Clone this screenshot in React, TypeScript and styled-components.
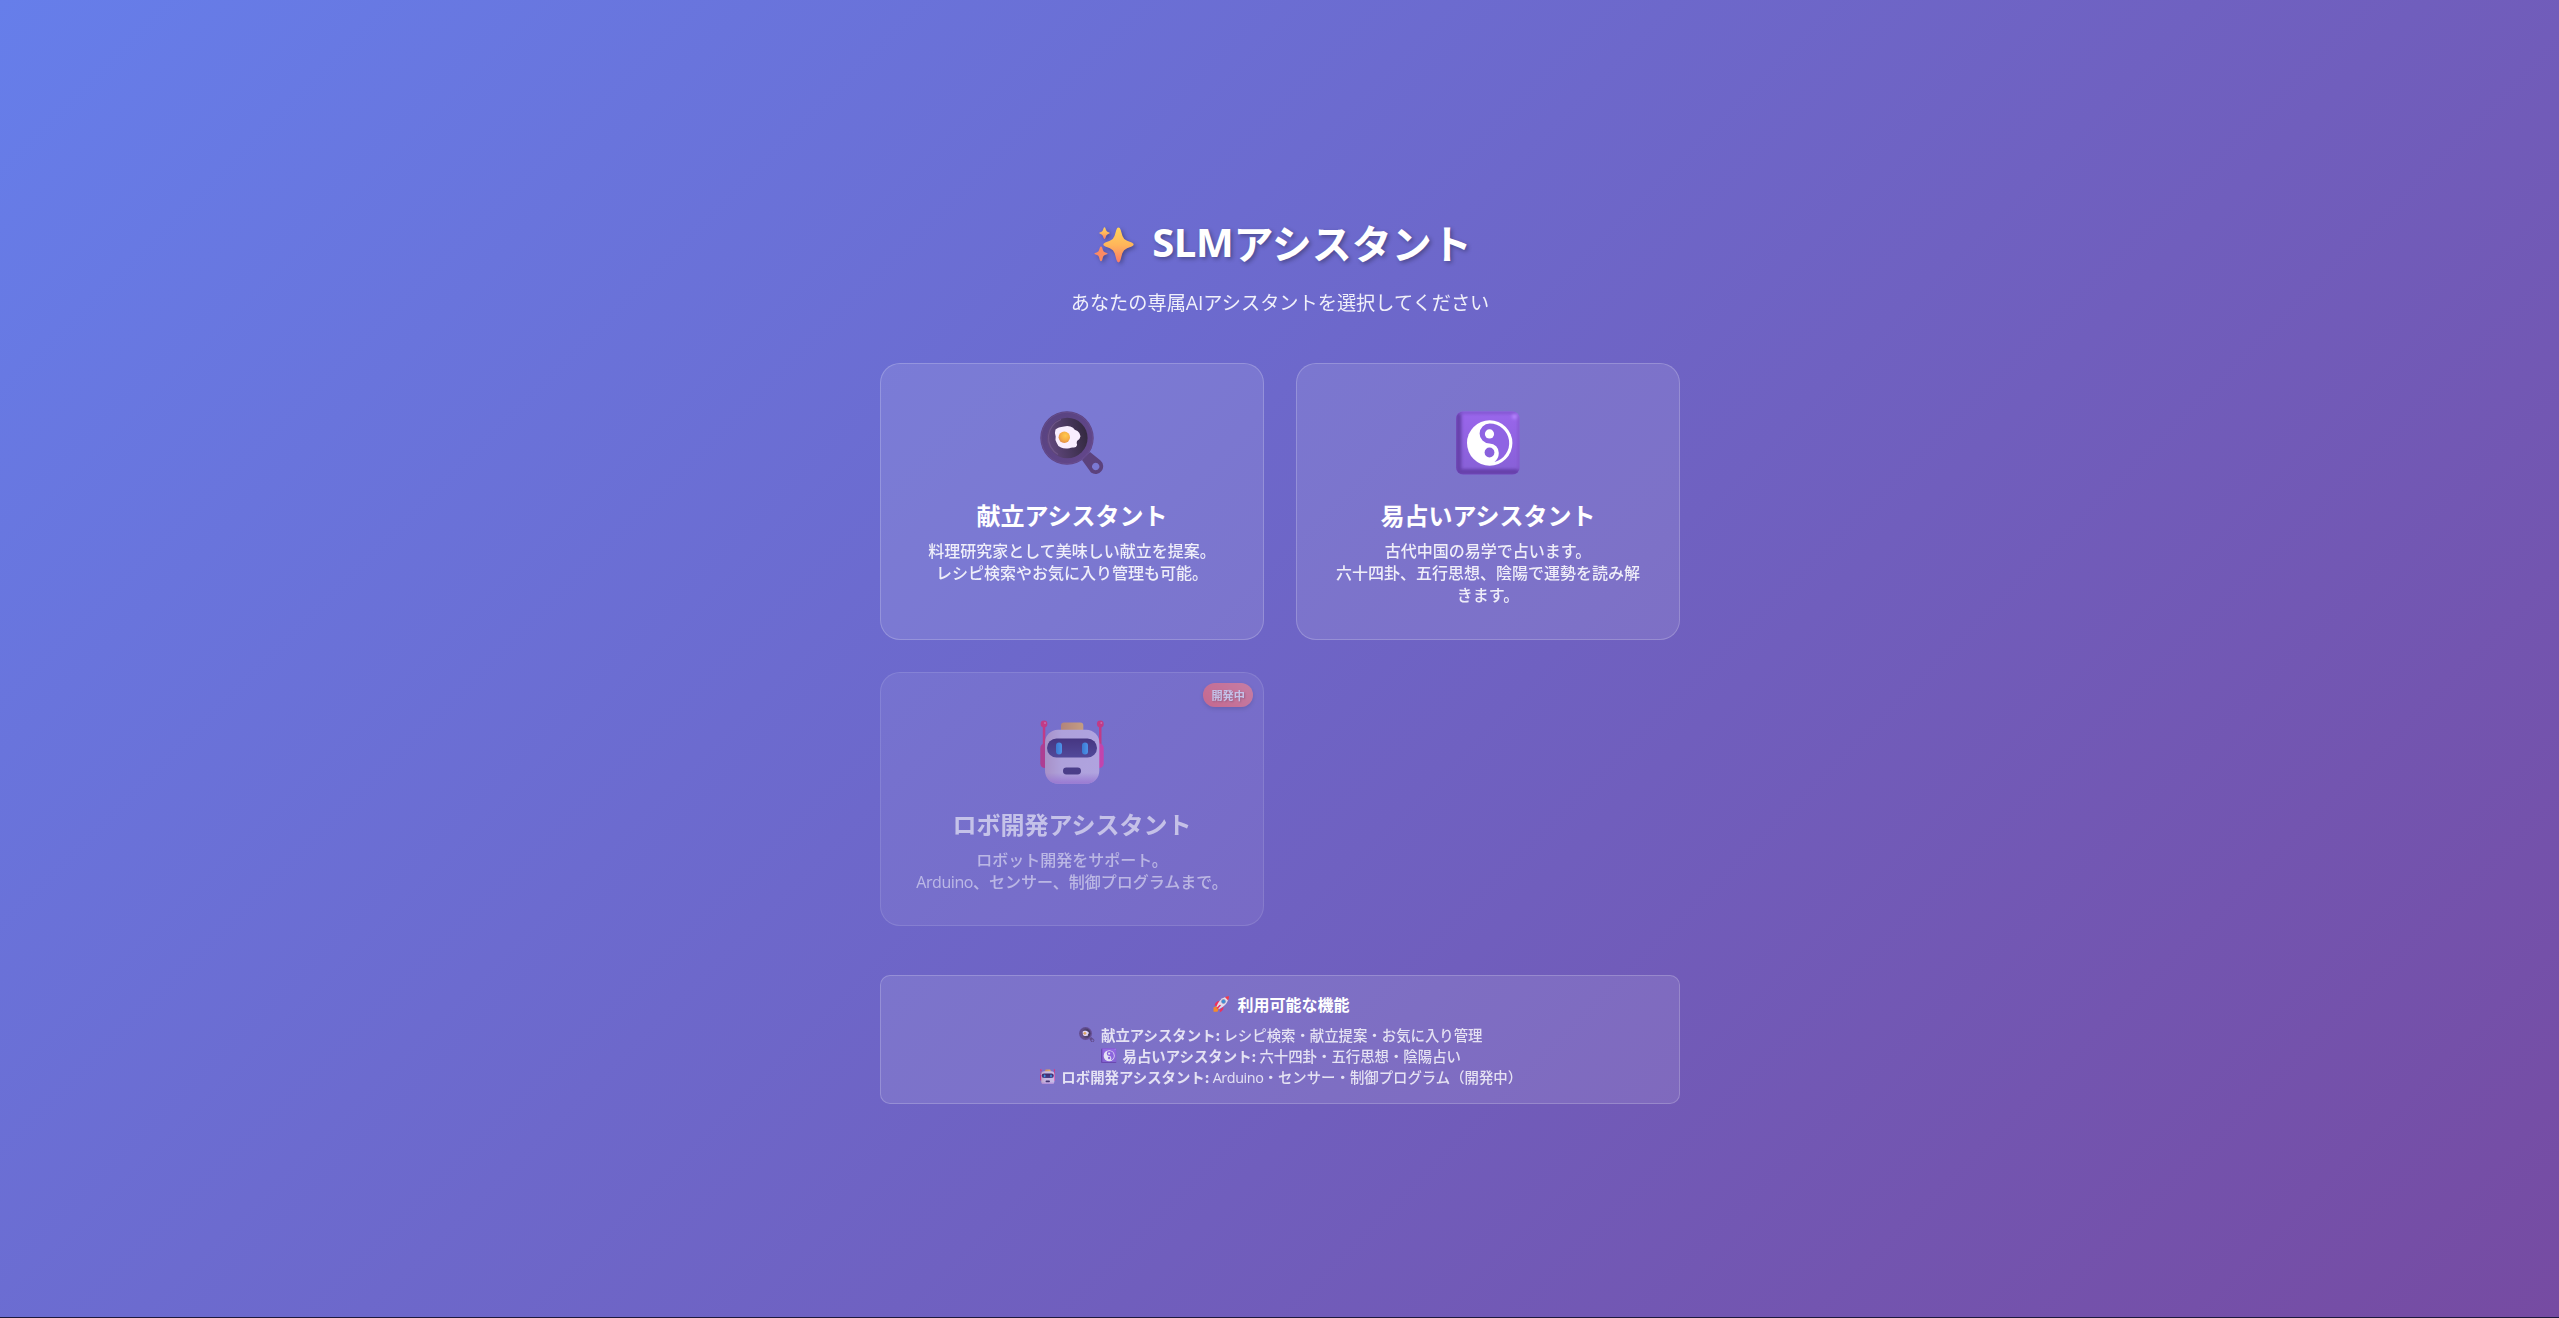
import React from "react";
import styled, { createGlobalStyle, css } from "styled-components";

const GlobalStyle = createGlobalStyle`
  * { margin: 0; padding: 0; box-sizing: border-box; }
  body {
    font-family: "Noto Sans CJK JP", "Noto Sans", sans-serif;
    color: #fff;
    background: #1c1a3c;
  }
`;

const Page = styled.div`
  height: 1317px;
  padding: 213px 0 0 1px;
  display: flex;
  flex-direction: column;
  align-items: center;
  background: linear-gradient(135deg, #667eea 0%, #764ba2 100%);
`;

const Container = styled.main`
  width: 800px;
  text-align: center;
`;

const Latin = styled.span<{ $tracking?: string }>`
  font-family: "Open Sans", "Noto Sans", sans-serif;
  line-height: 1;
  letter-spacing: ${(p) => p.$tracking ?? "-0.028em"};
`;

const Heading = styled.h1`
  display: flex;
  justify-content: center;
  align-items: center;
  height: 60px;
  padding-bottom: 2px;
  font-size: 40px;
  line-height: 58px;
  font-weight: 700;
  text-shadow: 2px 2px 4px rgba(0, 0, 0, 0.3);

  svg {
    width: 40px;
    height: 36px;
    margin: 5px 18px 0 6px;
    filter: drop-shadow(2px 2px 2px rgba(0, 0, 0, 0.3));
  }
`;

const Subtitle = styled.p`
  height: 30px;
  margin: 14px 0 46.2px;
  font-size: 19.2px;
  line-height: 30px;
  opacity: 0.9;
`;

const CardGrid = styled.div`
  display: grid;
  grid-template-columns: 1fr 1fr;
  grid-template-rows: 276.8px 254.4px;
  gap: 32px;
`;

const glass = css`
  background: rgba(255, 255, 255, 0.1);
  border: 1px solid rgba(255, 255, 255, 0.2);
`;

const Card = styled.section<{ $disabled?: boolean }>`
  ${glass}
  position: relative;
  padding: 32px 32px 0;
  border-radius: 20px;
  opacity: ${(p) => (p.$disabled ? 0.6 : 1)};
`;

const CardIcon = styled.div`
  height: 88px;
  margin-bottom: 15px;
  padding-top: 15px;

  svg {
    display: block;
    width: 64px;
    height: 64px;
    margin: 0 auto;
  }
`;

const CardTitle = styled.h2`
  margin-bottom: 8px;
  font-size: 24px;
  line-height: 31.6px;
  font-weight: 700;
`;

const CardText = styled.p`
  font-size: 16px;
  line-height: 22px;
  font-weight: 500;
  opacity: 0.88;
`;

const Badge = styled.span`
  position: absolute;
  top: 10px;
  right: 10px;
  height: 24px;
  padding: 0 8px;
  border-radius: 12px;
  background: linear-gradient(45deg, #ff6b6b, #ff8e8e);
  box-shadow: 0 2px 4px rgba(0, 0, 0, 0.2);
  font-size: 11.2px;
  line-height: 24px;
  font-weight: 700;
  text-shadow: 1px 1px 2px rgba(0, 0, 0, 0.3);
`;

const Info = styled.section`
  ${glass}
  height: 129px;
  margin-top: 48.4px;
  padding-top: 14px;
  border-radius: 10px;
`;

const InfoTitle = styled.h3`
  display: flex;
  justify-content: center;
  align-items: center;
  height: 28px;
  margin-bottom: 6px;
  font-size: 16px;
  font-weight: 700;

  svg { width: 18px; height: 18px; margin: 0 7px 0 2px; }
`;

const InfoLine = styled.p`
  display: flex;
  justify-content: center;
  align-items: center;
  height: 21.2px;
  font-size: 14.4px;
  line-height: 21.2px;
  font-weight: 500;
  opacity: 0.8;
  white-space: pre;

  svg { width: 15.500px; height: 15.500px; margin: 0 6px 0 2px; }
`;

const Sparkles = () => (
  <svg viewBox="0 0 40 36">
    <defs>
      <linearGradient id="sp" x1="0" y1="0" x2="0" y2="1">
        <stop offset="0" stopColor="#ffd25c" />
        <stop offset="0.5" stopColor="#ffb65a" />
        <stop offset="1" stopColor="#fb7a66" />
      </linearGradient>
    </defs>
    <g fill="url(#sp)">
      <path d="M24.5 0.5q1.5 0 2.2 2.4l1.8 6q1.2 3.6 4.6 4.8l4.6 1.8q2 .8 2 2t-2 2l-4.6 1.7q-3.6 1.3-4.8 5l-1.8 6.900q-.7 2.400-2 2.400t-2-2.400l-1.800-6.900q-1.200-3.700-4.800-5l-4.600-1.700q-2-.8-2-2t2-2l4.600-1.800q3.400-1.200 4.600-4.800l1.800-6q.7-2.400 2.200-2.400z" />
      <path d="M10.500.3q.6 0 .9 1l.7 2q.5 1.300 1.700 1.700l1.500.6q1.100.5 0 1l-1.500.6q-1.200.5-1.700 1.800l-.7 2.100q-.9 1.800-1.800 0l-.7-2.100q-.5-1.300-1.700-1.800l-1.500-.6q-1.100-.5 0-1l1.500-.6q1.200-.4 1.700-1.700l.7-2q.3-1 .9-1z" />
      <path fill="#fb8a63" d="M7 19.500q.8 0 1.200 1.300l.8 2.500q.5 1.500 1.900 2l2 .8q1.300.6 0 1.200l-2 .8q-1.400.5-1.900 2l-.8 2.900q-1.200 2.600-2.400 0l-.8-2.900q-.5-1.500-1.900-2l-2-.8q-1.300-.6 0-1.200l2-.8q1.400-.5 1.900-2l.8-2.500q.4-1.300 1.200-1.300z" />
    </g>
  </svg>
);

const Pan = () => (
  <svg viewBox="0 0 64 64">
    <defs>
      <linearGradient id="panIn" x1="0" y1="0.6" x2="1" y2="0.4">
        <stop offset="0" stopColor="#63497f" />
        <stop offset="0.5" stopColor="#4b3961" />
        <stop offset="1" stopColor="#33293f" />
      </linearGradient>
      <linearGradient id="panOut" x1="0" y1="0" x2="1" y2="1">
        <stop offset="0" stopColor="#57427f" />
        <stop offset="1" stopColor="#64478c" />
      </linearGradient>
      <radialGradient id="yolk" cx="0.6" cy="0.35" r="0.7">
        <stop offset="0" stopColor="#ffc94e" />
        <stop offset="0.6" stopColor="#f5ab45" />
        <stop offset="1" stopColor="#dd8b4e" />
      </radialGradient>
    </defs>
    <path fillRule="evenodd" fill="#5c427d" d="M42 49l8-8 10.500 8.500a7.700 7.700 0 0 1-9.500 12.100zM55.700 51.800a3.700 3.700 0 1 0 .01 0z" />
    <circle cx="27" cy="27" r="26.700" fill="url(#panOut)" />
    <circle cx="27" cy="27" r="25.700" fill="none" stroke="#6c5191" strokeWidth="1" opacity=".6" />
    <circle cx="27.300" cy="27" r="20.300" fill="url(#panIn)" />
    <path d="M21 8.500a19.500 19.500 0 0 0-3 35" fill="none" stroke="#765b93" strokeWidth="1.200" opacity=".7" />
    <path fill="#f9eeff" d="M24 15.500q5-1.300 9 1.200 1.300 2.300 4.500 3.300 3 2.300 3 5.200-.3 3-3.500 4.800-.7 2 .1 4-.7 2.700-3.600 2.500-2.500-.2-4 .7-5 1-8.500-.7-3.500-1.500-4.500-5-1.600-3-.8-6-1.300-4.500-.2-7 2.500-2.500 8.500-3z" />
    <circle cx="24.300" cy="26.300" r="5.700" fill="url(#yolk)" />
  </svg>
);

const YinYang = () => (
  <svg viewBox="0 0 64 64">
    <defs>
      <linearGradient id="yy" x1="0" y1="0" x2="0" y2="1">
        <stop offset="0" stopColor="#9a66ec" />
        <stop offset="1" stopColor="#8660d6" />
      </linearGradient>
      <filter id="yyBlur"><feGaussianBlur stdDeviation="1.600" /></filter>
      <clipPath id="yyClip"><rect x="0" y="0.500" width="63.600" height="63" rx="7" /></clipPath>
    </defs>
    <g clipPath="url(#yyClip)">
      <rect width="64" height="64" fill="url(#yy)" />
      <g filter="url(#yyBlur)" fill="none">
        <path d="M2.500-2V61H66" stroke="#6640ab" strokeWidth="6" />
        <path d="M2 1.500H61" stroke="#8154cf" strokeWidth="3" />
        <path d="M63 4V60" stroke="#8058cb" strokeWidth="2.500" />
        <circle cx="58.500" cy="5.500" r="2.500" fill="#b685ff" />
      </g>
    </g>
    <circle cx="33.700" cy="32" r="22.700" fill="#fff" />
    <path fill="#8f63e3" d="M33.700 12.500a19.500 19.500 0 0 1 4.800 38.400q4.300-3.600 4.300-8.900a9.200 9.200 0 0 0-9.200-9.400 10 10 0 0 1 .1-20.100z" />
    <circle cx="33.500" cy="22.900" r="4.600" fill="#fff" />
    <circle cx="33.500" cy="41.500" r="4.900" fill="#8961dc" />
  </svg>
);

const Robot = () => (
  <svg viewBox="0 0 64 64">
    <defs>
      <linearGradient id="face" x1="0" y1="0.500" x2="1" y2="0.500">
        <stop offset="0" stopColor="#cfaec8" />
        <stop offset="0.300" stopColor="#dac9e7" />
        <stop offset="1" stopColor="#dccdf0" />
      </linearGradient>
      <linearGradient id="faceLow" x1="0" y1="0" x2="0" y2="1">
        <stop offset="0.800" stopColor="#b27ed8" stopOpacity="0" />
        <stop offset="1" stopColor="#b27ed8" stopOpacity="0.900" />
      </linearGradient>
      <linearGradient id="visor" x1="0" y1="0" x2="0" y2="1">
        <stop offset="0" stopColor="#2c1753" />
        <stop offset="1" stopColor="#40367c" />
      </linearGradient>
      <linearGradient id="eye" x1="0" y1="0" x2="1" y2="0">
        <stop offset="0" stopColor="#1b88d8" />
        <stop offset="1" stopColor="#3bb0ff" />
      </linearGradient>
      <linearGradient id="hat" x1="0" y1="0" x2="1" y2="0">
        <stop offset="0" stopColor="#e09848" />
        <stop offset="1" stopColor="#ffc254" />
      </linearGradient>
    </defs>
    <g fill="#f8205c">
      <rect x="2.800" y="3" width="2.500" height="24" />
      <rect x="59" y="3" width="2.500" height="24" />
      <rect x="0.300" y="23.500" width="10" height="24.500" rx="4.500" fill="#d92470" />
      <rect x="54" y="23.500" width="9.700" height="24.500" rx="4.500" fill="#fb2f9c" />
      <circle cx="4" cy="4" r="3.400" />
      <circle cx="60.300" cy="4" r="3.400" />
      <circle cx="5" cy="3" r="1" fill="#ff70a0" />
      <circle cx="61.300" cy="3" r="1" fill="#ff70a0" />
    </g>
    <rect x="21" y="2.500" width="22.300" height="11" rx="3" fill="url(#hat)" />
    <rect x="5" y="9.700" width="54.300" height="54" rx="13" fill="url(#face)" />
    <rect x="5" y="9.700" width="54.300" height="54" rx="13" fill="url(#faceLow)" />
    <rect x="7" y="18.500" width="50" height="19" rx="9.500" fill="url(#visor)" />
    <rect x="16" y="22.500" width="6" height="12" rx="3" fill="url(#eye)" />
    <rect x="42" y="22.500" width="6" height="12" rx="3" fill="url(#eye)" />
    <rect x="23" y="47.500" width="18" height="7" rx="3.400" fill="#342460" />
  </svg>
);

const Rocket = () => (
  <svg viewBox="0 0 18 18">
    <path d="M1.500 12.500l3.500-1.500 2 2-1.500 3.800H1.500z" fill="#f58a2a" />
    <path d="M2.500 10.500q1-4.500 5-4.500l-2 5zM7.500 15q1 2 0 2.500 4-1.500 4-6z" fill="#f0305c" />
    <path d="M4.500 11.500Q7 4 13.500 2l2.700 2.700Q14 11 7 14z" fill="#e3dcec" />
    <path d="M13 2.200Q15 1 17 1.200 17.200 3.500 16 5.300z" fill="#f33a4c" />
    <circle cx="11.500" cy="6.500" r="2" fill="#3b8fd6" stroke="#9385ad" strokeWidth=".6" />
    <path d="M5.500 13L8 10.500" stroke="#ee2b63" strokeWidth="1.600" strokeLinecap="round" />
  </svg>
);

export default function App() {
  return (
    <>
      <GlobalStyle />
      <Page>
        <Container>
          <Heading><Sparkles /><Latin $tracking="-0.01em">SLM</Latin>アシスタント</Heading>
          <Subtitle>あなたの専属<Latin $tracking="0">AI</Latin>アシスタントを選択してください</Subtitle>
          <CardGrid>
            <Card>
              <CardIcon><Pan /></CardIcon>
              <CardTitle>献立アシスタント</CardTitle>
              <CardText>料理研究家として美味しい献立を提案。<br />レシピ検索やお気に入り管理も可能。</CardText>
            </Card>
            <Card>
              <CardIcon><YinYang /></CardIcon>
              <CardTitle>易占いアシスタント</CardTitle>
              <CardText>古代中国の易学で占います。<br />六十四卦、五行思想、陰陽で運勢を読み解きます。</CardText>
            </Card>
            <Card $disabled>
              <Badge>開発中</Badge>
              <CardIcon><Robot /></CardIcon>
              <CardTitle>ロボ開発アシスタント</CardTitle>
              <CardText>ロボット開発をサポート。<br /><Latin>Arduino</Latin>、センサー、制御プログラムまで。</CardText>
            </Card>
          </CardGrid>
          <Info>
            <InfoTitle><Rocket />利用可能な機能</InfoTitle>
            <InfoLine><Pan /><span><strong>献立アシスタント:</strong> レシピ検索・献立提案・お気に入り管理</span></InfoLine>
            <InfoLine><YinYang /><span><strong>易占いアシスタント:</strong> 六十四卦・五行思想・陰陽占い</span></InfoLine>
            <InfoLine><Robot /><span><strong>ロボ開発アシスタント:</strong> <Latin>Arduino</Latin>・センサー・制御プログラム（開発中）</span></InfoLine>
          </Info>
        </Container>
      </Page>
    </>
  );
}
